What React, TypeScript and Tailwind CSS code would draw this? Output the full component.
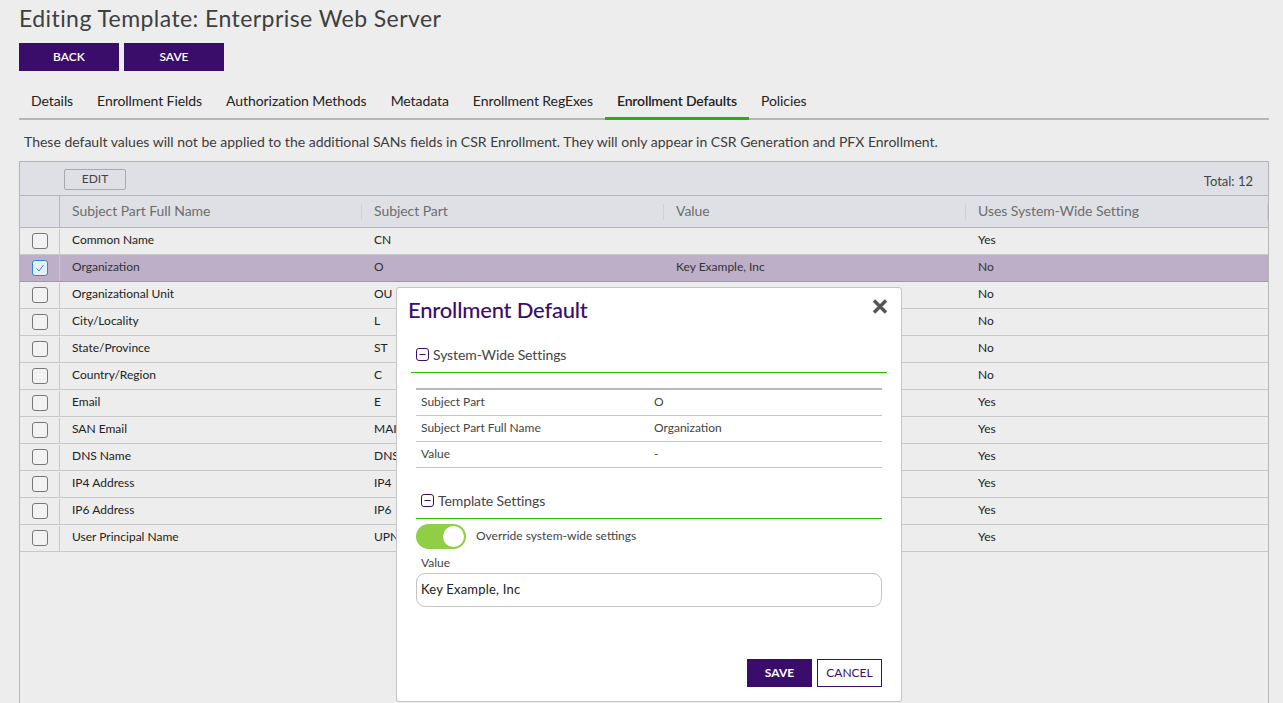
const rows: [string, string, string, string][] = [
  ["Common Name", "CN", "", "Yes"],
  ["Organization", "O", "Key Example, Inc", "No"],
  ["Organizational Unit", "OU", "", "No"],
  ["City/Locality", "L", "", "No"],
  ["State/Province", "ST", "", "No"],
  ["Country/Region", "C", "", "No"],
  ["Email", "E", "", "Yes"],
  ["SAN Email", "MAIL", "", "Yes"],
  ["DNS Name", "DNS", "", "Yes"],
  ["IP4 Address", "IP4", "", "Yes"],
  ["IP6 Address", "IP6", "", "Yes"],
  ["User Principal Name", "UPN", "", "Yes"],
];
const tabs = ["Details", "Enrollment Fields", "Authorization Methods", "Metadata", "Enrollment RegExes", "Enrollment Defaults", "Policies"];
const heads = ["Subject Part Full Name", "Subject Part", "Value", "Uses System-Wide Setting"];

function Minus() {
  return (
    <svg width="13" height="13" viewBox="0 0 13 13" className="shrink-0">
      <rect x="0.5" y="0.5" width="12" height="12" rx="2.5" fill="none" stroke="#3b0d6b" strokeWidth="1" />
      <path d="M3.5 6.5h6" stroke="#3b0d6b" strokeWidth="1" />
    </svg>
  );
}

export default function App() {
  return (
    <div className="relative h-[703px] w-[1283px] overflow-hidden bg-[#ededed] font-['Lato','Open_Sans',sans-serif] text-[#333]">
      <div className="pl-[19px] pr-[14px]">
        <h1 className="h-[43px] pb-[7px] text-[23px] leading-[36px] tracking-[0.43px] text-[#3f3f3f]">Editing Template: Enterprise Web Server</h1>
        <div className="flex gap-[5px]">
          {["BACK", "SAVE"].map((b) => (
            <button key={b} className="h-[28px] w-[100px] bg-[#3b0d6b] text-[12px] font-semibold text-white">{b}</button>
          ))}
        </div>
        <div className="mt-[19px] flex h-[30px] border-b-2 border-[#b5b5b8]">
          {tabs.map((t) => {
            const on = t === "Enrollment Defaults";
            return (
              <div key={t} className={"-mb-[2px] h-[30px] px-[12px] pt-[1px] text-[14px] leading-[20px] text-[#222] " + (on ? "border-b-[3px] border-[#2aad0e] font-semibold tracking-[-0.17px]" : "tracking-[-0.07px]")}>{t}</div>
            );
          })}
        </div>
        <p className="mt-[12px] pl-[5px] text-[14px] leading-[20px] text-[#3c3c3c]">These default values will not be applied to the additional SANs fields in CSR Enrollment. They will only appear in CSR Generation and PFX Enrollment.</p>
        <div className="mt-[9px] h-[542px] border border-b-0 border-[#b5b5b8]">
          <div className="flex h-[34px] items-center justify-between border-b border-[#b5b5b8] bg-[#dfe0e5] pl-[44px] pr-[15px]">
            <div className="mt-[1px] flex h-[21px] w-[62px] items-center justify-center rounded-[2px] border border-[#aaa] text-[12px] text-[#444]">EDIT</div>
            <span className="mt-[6px] text-[13px] text-[#444]">Total: 12</span>
          </div>
          <div className="grid h-[32px] grid-cols-[40px_302px_302px_302px_1fr] items-center border-b border-[#b5b5b8] bg-[#dfe0e5]">
            <div className="h-full border-r border-[#b5b5b8]" />
            {heads.map((h) => (
              <div key={h} className="flex h-[16px] items-center border-r border-[#cfd0d4] pb-[3px] pl-[12px] text-[14px] tracking-[-0.06px] text-[#6d6d6d]">{h}</div>
            ))}
          </div>
          {rows.map((r) => {
            const sel = r[0] === "Organization";
            return (
              <div key={r[0]} className={"grid h-[27px] grid-cols-[40px_302px_302px_302px_1fr] items-center border-b text-[12px] " + (sel ? "border-[#a393b5] bg-[#bdafc8] text-[#333]" : "border-[#c9c9cc] text-[#222]")}>
                <div className="flex h-[25px] items-center justify-center border-r border-[#c9c9cc]">
                  {sel ? (
                    <div className="flex h-[16px] w-[16px] items-center justify-center rounded-[3px] border border-[#2f86e0] bg-[#e9eef6]">
                      <svg width="12" height="12" viewBox="0 0 12 12"><path d="M2.5 6.5l2.5 2.5 4.5-6" fill="none" stroke="#2f86e0" strokeWidth="1" /></svg>
                    </div>
                  ) : (
                    <div className="h-[16px] w-[16px] rounded-[3px] border border-[#777] bg-[#f2f2f2]" />
                  )}
                </div>
                {r.map((c, i) => (
                  <div key={i} className="pb-[2px] pl-[12px]">{c}</div>
                ))}
              </div>
            );
          })}
        </div>
      </div>

      <div className="absolute left-[396px] top-[287px] h-[415px] w-[506px] rounded-[3px] border border-[#c4c4c4] bg-white px-[14px]">
        <div className="flex h-[44px] items-center justify-between pb-[2px]">
          <h2 className="-ml-[3px] text-[22px] font-medium tracking-[-0.2px] text-[#3b0d6b]">Enrollment Default</h2>
          <svg width="16" height="15" viewBox="0 0 16 15" className="mb-[5px] ml-auto mr-[-1px]"><path d="M2 1.5l12 12M14 1.5l-12 12" stroke="#555" strokeWidth="3.4" /></svg>
        </div>
        <div className="flex h-[41px] items-center gap-[5px] border-b border-[#2fbf00] pl-[5px] pt-[4px] text-[14px] text-[#444]">
          <Minus /><span className="-ml-[1px] tracking-[-0.1px]">System-Wide Settings</span>
        </div>
        <div className="mx-[5px] mt-[15px] border-t-2 border-[#b9b9bd]">
          {[["Subject Part", "O"], ["Subject Part Full Name", "Organization"], ["Value", "-"]].map(([a, b]) => (
            <div key={a} className="grid h-[26px] grid-cols-[233px_1fr] items-center border-b border-[#c4c4c4] pb-[2px] pl-[5px] text-[12px] text-[#444]">
              <span>{a}</span><span>{b}</span>
            </div>
          ))}
        </div>
        <div className="mx-[5px] mt-[16px] flex h-[35px] items-center gap-[5px] border-b border-[#2fbf00] pb-[2px] pl-[5px] text-[14px] text-[#444]">
          <Minus /><span className="-ml-[1px] tracking-[-0.1px]">Template Settings</span>
        </div>
        <div className="mx-[5px] mt-[5px] flex items-center gap-[10px]">
          <div className="flex h-[25px] w-[50px] items-center justify-end rounded-full bg-[#8fce45] pr-[2px]">
            <div className="h-[21px] w-[21px] rounded-full bg-white" />
          </div>
          <span className="pb-[2px] text-[12px] text-[#444]">Override system-wide settings</span>
        </div>
        <div className="mx-[5px] mt-[7px] pl-[5px] text-[12px] leading-[14px] text-[#444]">Value</div>
        <div className="mx-[5px] mt-[3px] flex h-[34px] items-center rounded-[9px] border border-[#c4c4c4] pl-[4px] text-[13px] tracking-[0.2px] text-[#222]">Key Example, Inc</div>
        <div className="mx-[5px] mt-[52px] flex justify-end gap-[5px]">
          <button className="h-[28px] w-[65px] bg-[#3b0d6b] text-[12px] font-bold text-white">SAVE</button>
          <button className="h-[28px] w-[65px] border border-[#3b0d6b] bg-white text-[12px] text-[#3b0d6b]">CANCEL</button>
        </div>
      </div>
    </div>
  );
}
